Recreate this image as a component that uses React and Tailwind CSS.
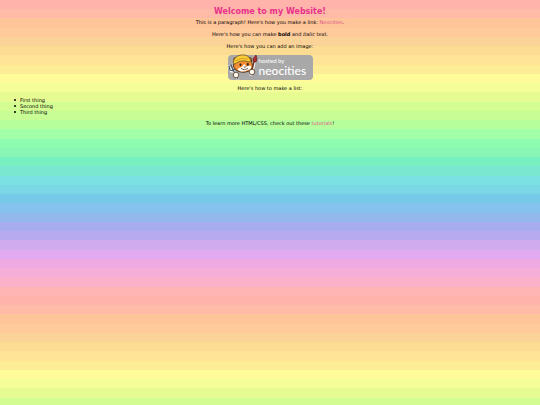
import React from "react";

const STRIPES = [
  "#ffb3ab", "#ffbba8", "#fec49a", "#feca9b",
  "#fbd399", "#fcdb93", "#ffe498", "#fdec96",
  "#fffb98", "#f4fd98", "#e6fc93", "#d3fd92",
  "#c8fd96", "#b5fe9b", "#a3fea8", "#8dfcb0",
  "#89f6b5", "#79f0bf", "#7ae7d0", "#7ce1e3",
  "#7cd7e4", "#77c9e9", "#85c2ed", "#92b8ec",
  "#a6acee", "#b8aaee", "#d0abee", "#e2aaf0",
  "#f0aae2", "#f5aed8", "#fbb1c9", "#ffb5b3",
];

const LIST = ["First thing", "Second thing", "Third thing"];

function rainbow(colors) {
  const step = 100 / colors.length;
  const stops = colors.map((c, i) => `${c} ${i * step}% ${(i + 1) * step}%`);
  return `linear-gradient(${stops.join(", ")})`;
}

function Cat() {
  return (
    <svg viewBox="0 0 32 27" className="-ml-0.5 h-[27px] w-8 shrink-0" aria-hidden="true">
      {/* fork */}
      <g stroke="#fff" strokeWidth="2.4" strokeLinecap="round" fill="none">
        <path d="M6 15 L12 25" />
        <path d="M3 12 L5 17 Q8 18 9 14 L7 10" />
      </g>
      <g stroke="#4b5663" strokeWidth="1.3" strokeLinecap="round" fill="none">
        <path d="M3 12 L4 16 Q8 18 9 14 L7 10 M5 11 L7 16 L12 25" />
      </g>
      {/* brush */}
      <path d="M29 4 L25 20" stroke="#fff" strokeWidth="3.4" strokeLinecap="round" />
      <path d="M28 8 L25 20" stroke="#6b3a28" strokeWidth="1.4" strokeLinecap="round" />
      <path d="M30 1 Q32 5 30 8 L27 8 Q26 4 30 1Z" fill="#b52d2d" stroke="#442424" strokeWidth=".6" />
      {/* head */}
      <path
        d="M8 9 L8 4 L12 4 Q17 1 21 3 L25 4 L26 9 Q28 14 23 17 Q16 20 10 16 Q6 13 8 9Z"
        fill="#f28d35"
        stroke="#53351f"
        strokeWidth="1"
        strokeLinejoin="round"
      />
      <path d="M18 10 Q20 11 20 13 Q23 11 25 12 Q26 15 22 16 Q16 19 12 16 Q11 15 13 14 Q17 13 18 10Z" fill="#fff" />
      {/* hat */}
      <path
        d="M7 9 Q8 2 15 1 Q23 0 25 7 L23 8 Q15 5 9 10Z"
        fill="#f8cc35"
        stroke="#76551c"
        strokeWidth=".8"
      />
      <path d="M9 7 Q15 3 22 5" stroke="#c88c20" strokeWidth=".7" fill="none" />
      <ellipse cx="14.5" cy="10.8" rx="1" ry="1.4" fill="#302620" />
      <ellipse cx="21.8" cy="10.4" rx="1" ry="1.4" fill="#302620" />
      <path d="M15 14.5 Q18 17 22 14.5" stroke="#53351f" strokeWidth=".8" fill="none" />
      <path d="M17.5 12.8 L20 12.6 L19 14Z" fill="#53351f" />
      {/* paws */}
      <circle cx="10" cy="21" r="2.8" fill="#fffaf0" stroke="#53351f" strokeWidth=".8" />
      <circle cx="26" cy="18" r="2.8" fill="#fffaf0" stroke="#53351f" strokeWidth=".8" />
    </svg>
  );
}

function Badge() {
  return (
    <a
      href="#neocities"
      aria-label="hosted by neocities"
      className="mx-auto flex h-[25px] w-[85px] items-center gap-px rounded-[4px] bg-[#a8a8a8] font-['Lato',sans-serif] text-white"
    >
      <Cat />
      <span className="flex flex-col text-left">
        <span className="text-[6px] leading-[6px]">hosted by</span>
        <span className="text-[12px] leading-[14px] font-medium">neocities</span>
      </span>
    </a>
  );
}

export default function App() {
  return (
    <main
      className="min-h-screen bg-[length:100%_296px] bg-repeat-y px-[3px] pt-2 text-center font-['DejaVu_Sans',sans-serif] text-[5px] leading-[7px] text-black"
      style={{ backgroundImage: rainbow(STRIPES) }}
    >
      <h1 className="mb-[3px] text-[8px] leading-[8px] font-bold text-[#e8308c]">
        Welcome to my Website!
      </h1>
      <div className="space-y-[5px]">
        <p>
          This is a paragraph! Here's how you make a link:{" "}
          <a href="#neocities" className="text-[#e0508a]">Neocities</a>.
        </p>
        <p>
          Here's how you can make <strong>bold</strong> and <em>italic</em> text.
        </p>
        <p>Here's how you can add an image:</p>
        <Badge />
        <p>Here's how to make a list:</p>
        <ul className="pl-[11px] text-left leading-[6px]">
          {LIST.map((item) => (
            <li
              key={item}
              className="flex items-center gap-1 before:size-[2px] before:rounded-full before:bg-black before:content-['']"
            >
              {item}
            </li>
          ))}
        </ul>
        <p>
          To learn more HTML/CSS, check out these{" "}
          <a href="#tutorials" className="text-[#e0508a]">tutorials</a>!
        </p>
      </div>
    </main>
  );
}
